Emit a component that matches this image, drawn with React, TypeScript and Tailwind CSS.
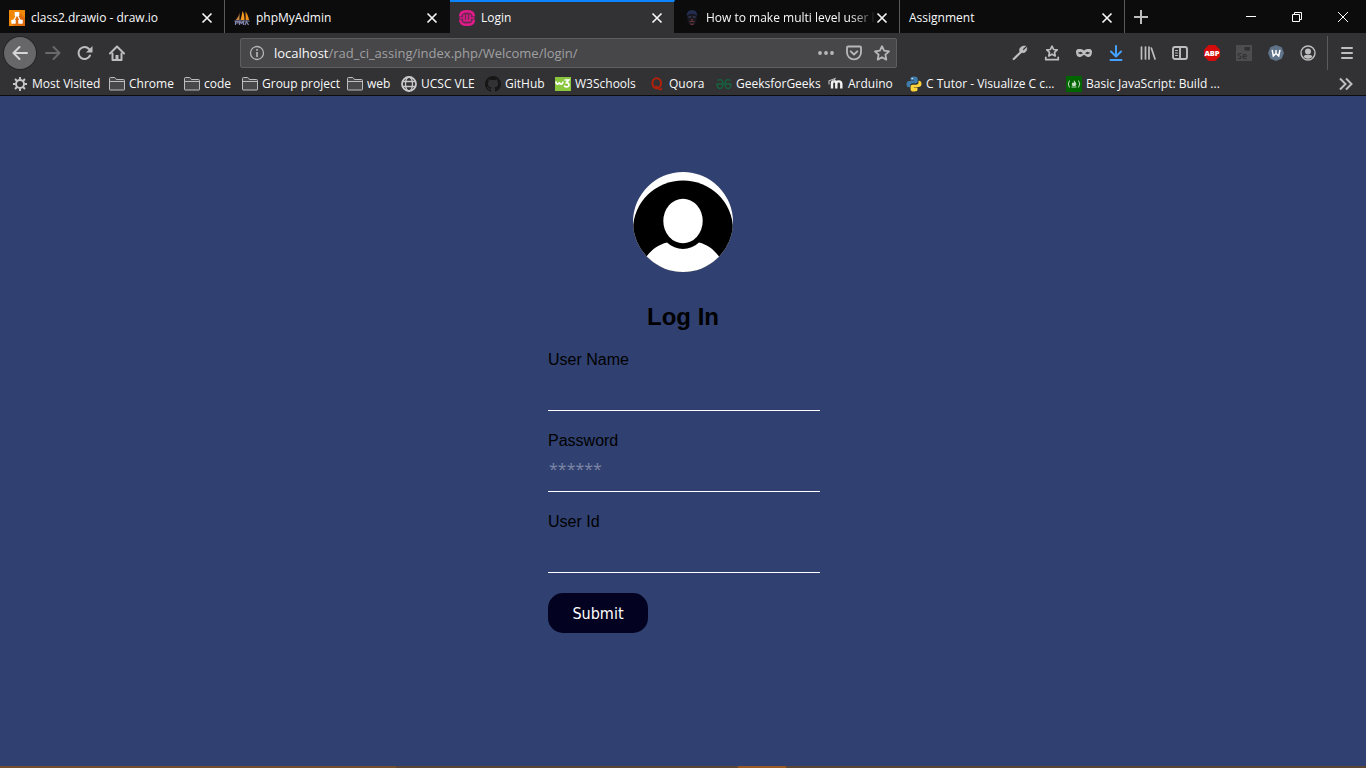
import type { ReactNode } from "react";

const UI_FONT = "font-['Open_Sans','Noto_Sans',sans-serif]";

/* ---------- favicons and bookmark icons ---------- */

const DrawioIcon = () => (
  <svg width="16" height="16" viewBox="0 0 16 16" className="shrink-0">
    <rect width="16" height="16" fill="#f08705" />
    <path d="M10 2.5 16 8v8H5.500L2.500 13.500 6 9z" fill="#df6c0c" />
    <path d="M8 4.500 4.500 11M8 4.500l3.500 6.500" stroke="#fff" strokeWidth="1.300" />
    <rect x="5.700" y="2" width="4.600" height="4" rx=".5" fill="#fff" />
    <rect x="2.300" y="9.700" width="4.400" height="4" rx=".5" fill="#fff" />
    <rect x="9.300" y="9.700" width="4.400" height="4" rx=".5" fill="#fff" />
  </svg>
);

const PmaIcon = () => (
  <svg width="16" height="16" viewBox="0 0 16 16" className="shrink-0">
    <path d="M5.500 2.500V10H1.500C3.500 8 5 5.500 5.500 2.500z" fill="#c98542" />
    <path d="M8.500 1C8 4 7.500 7 6.500 10h4C10.500 6.500 10 3 8.500 1z" fill="#f59a23" />
    <path d="M11.500 1.500c0 3 .2 6 .2 8.500H15c-.5-3.500-1.800-6.500-3.500-8.500z" fill="#f08c1a" />
    <path d="M.5 11h15M1.500 10.500V15M1.500 11.500h2.500v1.500H1.500M5.500 15v-3.500L7.500 13.500l2-2V15M11 15l1.500-3.500L14.500 15" stroke="#8286ad" strokeWidth="1.200" fill="none" />
  </svg>
);

const WampIcon = () => (
  <svg width="16" height="16" viewBox="0 0 16 16" className="shrink-0" fill="none">
    <rect width="16" height="16" rx="6" fill="#6b2850" />
    <path d="M1.200 6.300C1.200 3 3.500 1.200 8 1.200s6.800 1.800 6.800 5.100M1.200 9.700c0 3.300 2.300 5.100 6.800 5.100s6.800-1.800 6.800-5.100" stroke="#e31a8c" strokeWidth="2.400" />
    <path d="M.8 8h3M12.200 8h3" stroke="#e31a8c" strokeWidth="1.500" />
    <path d="M5 4.500v6.300h6V4.500M8 4.500v6" stroke="#e31a8c" strokeWidth="1.600" />
  </svg>
);

const FaceIcon = () => (
  <svg width="16" height="16" viewBox="0 0 16 16" className="shrink-0">
    <path d="M3 6c0-4 2-5.700 5-5.700S13 2 13 6c0 5-1.800 9.500-5 9.500S3 11 3 6z" fill="#18161f" />
    <path d="M2.800 6C2.700 2 5 .3 8 .3s5.300 1.700 5.200 5.700C12 4.300 10 3.800 8 3.800S4 4.300 2.800 6z" fill="#232e52" />
    <path d="M4.500 7h2.700M8.800 7h2.700" stroke="#46506f" strokeWidth="1" />
    <path d="M5.500 11.800c1.500-.8 3.500-.8 5 0M6 13.800c1.300.7 2.700.7 4 0M7 9.800h2" stroke="#7a3d3a" strokeWidth="1" fill="none" />
  </svg>
);

const GearIcon = () => (
  <svg width="16" height="16" viewBox="0 0 16 16" className="shrink-0" fill="none" stroke="#c8c8c9">
    <circle cx="8" cy="8" r="4" strokeWidth="1.900" />
    <path d="M8 1v2.500M8 12.500V15M1 8h2.500M12.500 8H15M3 3l2 2M11 11l2 2M13 3l-2 2M5 11l-2 2" strokeWidth="1.900" />
  </svg>
);

const FolderIcon = () => (
  <svg width="16" height="16" viewBox="0 0 16 16" className="shrink-0" fill="#48484a" stroke="#bdbdbe" strokeLinejoin="round">
    <path d="M.5 13.500v-11q0-1 1-1h4q.7 0 1 .7l.8 1.300h7.200q1 0 1 1v9q0 .5-.6.5H1q-.5 0-.5-.5z" />
    <path d="M.5 5.500h15" />
  </svg>
);

const GlobeIcon = () => (
  <svg width="16" height="16" viewBox="0 0 16 16" className="shrink-0" fill="none" stroke="#c8c8c9" strokeWidth="1.300">
    <circle cx="8" cy="8" r="7" strokeWidth="1.800" />
    <ellipse cx="8" cy="8" rx="3.500" ry="7" />
    <path d="M1.500 5.500h13M1.500 10.500h13" />
  </svg>
);

const GithubIcon = () => (
  <svg width="16" height="16" viewBox="0 0 16 16" className="shrink-0" fill="#161616">
    <path d="M8 0a8 8 0 0 0-2.530 15.590c.4.070.55-.17.55-.38v-1.490c-2.010.37-2.530-.49-2.690-.94-.09-.23-.48-.94-.82-1.130-.28-.15-.68-.52-.01-.53.630-.01 1.080.58 1.230.82.720 1.210 1.870.87 2.330.66.070-.52.280-.87.510-1.070-1.780-.2-3.640-.89-3.640-3.950 0-.87.310-1.590.82-2.150-.08-.2-.36-1.020.08-2.120 0 0 .67-.21 2.200.82a7.420 7.420 0 0 1 4 0c1.530-1.040 2.200-.82 2.200-.82.440 1.100.160 1.920.080 2.120.510.560.820 1.270.820 2.150 0 3.070-1.870 3.750-3.650 3.950.290.250.540.730.540 1.480v2.200c0 .21.150.46.550.38A8 8 0 0 0 8 0z" />
  </svg>
);

const W3Icon = () => (
  <svg width="16" height="16" viewBox="0 0 16 16" className="shrink-0" fill="none" stroke="#fff">
    <rect y="1" width="16" height="14" fill="#8bc63f" stroke="none" />
    <path d="M1 5.500c0 3.300 3 3.300 3.300.5.200 3 3.300 3 3.700-.5" strokeWidth="1.700" />
    <path d="M9.500 4h4.300l-2.300 2.700c3.500-.2 3.200 4.500-.2 4.200-1 0-1.800-.5-2-1.400" strokeWidth="1.600" />
  </svg>
);

const QuoraIcon = () => (
  <svg width="16" height="16" viewBox="0 0 16 16" className="shrink-0" fill="none" stroke="#b5200b">
    <ellipse cx="7.700" cy="7.300" rx="4.300" ry="5" strokeWidth="2" />
    <path d="M6 10.500c2.500-1 3.300 3.200 5 3.200 1.200 0 1.600-.7 1.600-1.700" strokeWidth="1.500" />
  </svg>
);

const GfgIcon = () => (
  <svg width="16" height="16" viewBox="0 0 16 16" className="shrink-0" fill="none" stroke="#14663f" strokeWidth="1.300">
    <path d="M1.500 4.500C5 2.300 7 4.500 7 8s-1.500 4.500-3.200 4.500S1 11 1 8h6M14.500 4.500C11 2.300 9 4.500 9 8s1.500 4.500 3.200 4.500S15 11 15 8H9" />
  </svg>
);

const MoodleIcon = () => (
  <svg width="16" height="16" viewBox="0 0 16 16" className="shrink-0" fill="none" stroke="#f2f2f2">
    <path d="M4 12.500V7.500c0-3 4.300-3 4.300 0v5M8.300 8c0-3.500 5-3.500 5 0v4.500" strokeWidth="2.400" />
    <path d="M.5 5 7 2.500 5.500 5.500M1 5v3.500" strokeWidth="1.200" stroke="#b9b9b9" />
  </svg>
);

const PythonIcon = () => (
  <svg width="16" height="16" viewBox="0 0 16 16" className="shrink-0">
    <path d="M8 .5c-3 0-3.500 1-3.500 2.300V4.500H8.200v.6H3C1.300 5.100.5 6.500.5 8.200S1.300 11.300 3 11.300h1.300V9.500c0-1.300 1-2.200 2.300-2.200h3.200c1.100 0 1.900-.9 1.900-2V2.800C11.700 1.300 10.500.5 8 .5z" fill="#3f7cac" />
    <path d="M8 15.500c3 0 3.500-1 3.500-2.300v-1.700H7.800v-.6H13c1.700 0 2.500-1.400 2.500-3.100S14.700 4.700 13 4.700h-.5v1.800c0 1.300-1 2.200-2.300 2.200H6.500c-1.100 0-1.900.9-1.900 2v2.500c0 1.500.9 2.300 3.400 2.300z" fill="#ffd43b" />
    <circle cx="6.200" cy="2.500" r=".7" fill="#fff" />
  </svg>
);

const FccIcon = () => (
  <svg width="16" height="16" viewBox="0 0 16 16" className="shrink-0" fill="none" stroke="#c4dcc4">
    <rect width="16" height="16" fill="#006400" stroke="none" />
    <path d="M3.500 4.500Q1 8 3.500 11.500M12.500 4.500Q15 8 12.500 11.500M5.500 11h5" strokeWidth="1" />
    <path d="M8 4c.3 1.500 2.500 2.300 2.300 4.300-.1 1-.8 1.700-1.300 1.700H6.700C5 8.500 6 7.300 7 6.200c.2.600.5.800.8.600C8.200 6 7.500 5 8 4z" fill="#c4dcc4" stroke="none" />
  </svg>
);

/* ---------- tab strip ---------- */

type Tab = { title: string; icon?: ReactNode; active?: boolean; divider?: boolean };

const tabs: Tab[] = [
  { title: "class2.drawio - draw.io", icon: <DrawioIcon />, divider: true },
  { title: "phpMyAdmin", icon: <PmaIcon /> },
  { title: "Login", icon: <WampIcon />, active: true },
  { title: "How to make multi level user lo", icon: <FaceIcon />, divider: true },
  { title: "Assignment", divider: true },
];

function TabItem({ title, icon, active, divider }: Tab) {
  return (
    <div
      className={`flex h-full w-[225px] min-w-0 items-center border-r pl-[9px] pr-[11px] ${
        active ? "border-t-2 border-t-[#0a84ff] bg-[#323234]" : "bg-[#0c0c0d] pt-[2px]"
      } ${divider ? "border-r-[#5b5b5d]" : active ? "border-r-[#0c0c0d]" : "border-r-transparent"}`}
    >
      {icon}
      <span
        className={`-mr-1 min-w-0 flex-1 whitespace-nowrap text-[12px] leading-4 ${icon ? "ml-[6px] " : ""}${
          title.length > 30 ? "[mask-image:linear-gradient(to_right,black_85%,transparent)]" : ""
        }`}
      >
        {title}
      </span>
      <button type="button" aria-label={`Close ${title}`} className="ml-1 flex h-4 w-3 items-center justify-center">
        <svg width="12" height="12" viewBox="0 0 12 12" stroke="#f4f4f5" strokeWidth="1.700" className="shrink-0">
          <path d="M1.500 1.500l9 9M10.500 1.500l-9 9" />
        </svg>
      </button>
    </div>
  );
}

function TabStrip() {
  return (
    <div className="flex h-[33px] items-stretch bg-[#0c0c0d]">
      {tabs.map((t) => (
        <TabItem key={t.title} {...t} />
      ))}
      <button type="button" aria-label="New tab" className="flex w-8 items-center justify-center">
        <svg width="14" height="14" viewBox="0 0 14 14" stroke="#bebebf" strokeWidth="2">
          <path d="M7 0v14M0 7h14" />
        </svg>
      </button>
      <div className="ml-auto flex">
        <button type="button" aria-label="Minimize" className="flex w-[46px] items-center justify-center">
          <svg width="10" height="10" viewBox="0 0 10 10" stroke="#fff">
            <path d="M0 4.500h10" />
          </svg>
        </button>
        <button type="button" aria-label="Restore" className="flex w-[46px] items-center justify-center">
          <svg width="10" height="10" viewBox="0 0 10 10" stroke="#fff" fill="none">
            <path d="M.5 2.500h7v7h-7zM2.500 2.500v-2h7v7h-2" />
          </svg>
        </button>
        <button type="button" aria-label="Close window" className="flex w-[46px] items-center justify-center">
          <svg width="10" height="10" viewBox="0 0 10 10" stroke="#fff">
            <path d="M0 0l10 10M10 0L0 10" />
          </svg>
        </button>
      </div>
    </div>
  );
}

/* ---------- navigation toolbar ---------- */

function ToolIcon({ label, children, color = "#bebebf" }: { label: string; children: ReactNode; color?: string }) {
  return (
    <button type="button" aria-label={label} className="flex h-8 w-8 items-center justify-center">
      <svg width="16" height="16" viewBox="0 0 16 16" fill="none" stroke={color} strokeWidth="2" strokeLinecap="round" strokeLinejoin="round">
        {children}
      </svg>
    </button>
  );
}

function Toolbar() {
  return (
    <div className="flex h-[39px] items-center bg-[#323234] pl-1 pr-[3px]">
      <button
        type="button"
        aria-label="Back"
        className="mr-px flex h-8 w-8 items-center justify-center rounded-full bg-[#67676a] ring-1 ring-[#252527]"
      >
        <svg width="16" height="16" viewBox="0 0 16 16" fill="none" stroke="#d6d6d7" strokeWidth="2" strokeLinecap="round" strokeLinejoin="round">
          <path d="M15 8H1.500M7.500 2l-6 6 6 6" />
        </svg>
      </button>
      <ToolIcon label="Forward" color="#69696b">
        <path d="M1 8h13.500M8.500 2l6 6-6 6" />
      </ToolIcon>
      <ToolIcon label="Reload">
        <path d="M13 10.500A6 6 0 1 1 12 4" />
        <path d="M15.500 1v6.500H9z" fill="#bebebf" strokeWidth="0" />
      </ToolIcon>
      <ToolIcon label="Home">
        <path d="M1 8.500 8 1.500l7 7" />
        <path d="M3.500 8.500V15h9V8.500" />
        <path d="M8 14.500V10" strokeLinecap="butt" strokeWidth="3" />
      </ToolIcon>

      <div className="ml-[107px] flex h-[30px] min-w-0 flex-1 items-center rounded-[2px] border border-[#5e5e60] bg-[#474749] px-2">
        <svg width="16" height="16" viewBox="0 0 16 16" fill="none" stroke="#b4b4b5" className="shrink-0">
          <circle cx="8" cy="8" r="6.500" strokeWidth="1.300" />
          <path d="M8 7v5M8 4v1.700" strokeWidth="1.700" />
        </svg>
        <a href="#" className="ml-[9px] min-w-0 flex-1 truncate text-[13px] leading-5 text-[#a0a0a2]">
          <span className="text-[#f9f9fa]">localhost</span>/rad_ci_assing/index.php/Welcome/login/
        </a>
        <div className="-mr-2 flex">
          <button type="button" aria-label="Page actions" className="flex w-7 items-center justify-center">
            <svg width="16" height="16" viewBox="0 0 16 16" fill="#b8b8b9">
              <circle cx="2" cy="8" r="1.900" />
              <circle cx="8" cy="8" r="1.900" />
              <circle cx="14" cy="8" r="1.900" />
            </svg>
          </button>
          <button type="button" aria-label="Save to Pocket" className="flex w-7 items-center justify-center">
            <svg width="16" height="16" viewBox="0 0 16 16" fill="none" stroke="#b8b8b9" strokeWidth="1.800" strokeLinecap="round" strokeLinejoin="round">
              <path d="M1 2.500q0-1 1-1h12q1 0 1 1V7.500a7 6.800 0 0 1-14 0z" />
              <path d="M4.700 6.300 8 9.500l3.300-3.200" />
            </svg>
          </button>
          <button type="button" aria-label="Bookmark this page" className="flex w-7 items-center justify-center">
            <svg width="16" height="16" viewBox="0 0 16 16" fill="none" stroke="#b8b8b9" strokeWidth="1.800" strokeLinejoin="round">
              <path d="M8 1.200l2.100 4.500 4.900.6-3.600 3.400.9 4.900L8 12.200l-4.300 2.400.9-4.900L1 6.300l4.900-.6z" />
            </svg>
          </button>
        </div>
      </div>

      <div className="ml-[107px] flex items-center">
        <ToolIcon label="Developer tools">
          <path d="M1.700 14 9 7" strokeWidth="2.200" />
          <path d="M13.500 1.200 10.500 4.200l1.200 1.200 3-3c.6 2.800-1 5.500-4 5.300L8 7.300 7.500 5C7.500 2.500 10.500.500 13.500 1.200z" fill="#bebebf" strokeWidth=".6" />
        </ToolIcon>
        <ToolIcon label="Bookmarks menu">
          <path d="M8 1.200l1.600 3.300 3.600.4-2.700 2.500.7 3.600L8 9.200 4.800 11l.7-3.600-2.700-2.500 3.600-.4z" strokeWidth="1.700" />
          <path d="M1.800 12.500v2.200h12.400V12.500" strokeWidth="1.800" />
        </ToolIcon>
        <ToolIcon label="Private browsing">
          <path
            d="M8 5.500C6 4 4 3.700 2.500 4 .8 4.300 0 5.200 0 7c0 3 1.500 5 3.700 5C6 12 6.700 10 8 10s2 2 4.300 2C14.500 12 16 10 16 7c0-1.800-.8-2.700-2.500-3-1.500-.3-3.500 0-5.500 1.500z"
            fill="#bebebf"
            strokeWidth="0"
          />
          <path d="M2.700 8q1.800-2 3.800.3Q4.300 9.700 2.700 8zM13.300 8q-1.800-2-3.800.3 2.200 1.400 3.800-.3z" fill="#323234" stroke="#323234" strokeWidth=".5" />
        </ToolIcon>
        <ToolIcon label="Downloads" color="#45a1ff">
          <path d="M8 1v10M3 6.500l5 5 5-5M2.500 15h11" />
        </ToolIcon>
        <ToolIcon label="Library">
          <path d="M1.500 2v12M5.500 2v12M9 2v12M11.300 3l3.700 11" strokeWidth="1.700" />
        </ToolIcon>
        <ToolIcon label="Sidebars">
          <rect x="1" y="2" width="14" height="12" rx="2" strokeWidth="1.900" />
          <path d="M8 2v12" strokeWidth="1.900" />
          <path d="M3.500 5.500h2M3.500 8h2M3.500 10.500h2" strokeWidth="1" />
        </ToolIcon>
        <button type="button" aria-label="AdBlock Plus" className="flex h-8 w-8 items-center justify-center">
          <svg width="16" height="16" viewBox="0 0 16 16">
            <path d="M4.700 0h6.600L16 4.700v6.600L11.300 16H4.700L0 11.300V4.700z" fill="#d40c0c" />
            <text x="8" y="11" textAnchor="middle" fontSize="7.500" fontWeight="800" fill="#fff">ABP</text>
          </svg>
        </button>
        <button type="button" aria-label="Selenium IDE" className="flex h-8 w-8 items-center justify-center">
          <svg width="16" height="16" viewBox="0 0 16 16">
            <rect width="16" height="16" fill="#4d4d4f" />
            <rect x="8.500" y="2" width="5.500" height="3.500" fill="#303032" />
            <text x="1" y="13.500" fontSize="9" fontWeight="600" fill="#303032">Se</text>
          </svg>
        </button>
        <button type="button" aria-label="Wappalyzer" className="flex h-8 w-8 items-center justify-center">
          <svg width="16" height="16" viewBox="0 0 16 16" fill="none">
            <path d="M8 0l5.700 2.300L16 8l-2.300 5.700L8 16l-5.700-2.300L0 8l2.300-5.700z" fill="#5f7389" />
            <path d="M4.200 4.800 5.300 11 8 8.500l2.700 2.500 1.300-6.200M8 5v3.500" stroke="#fff" strokeWidth="1.500" />
          </svg>
        </button>
        <ToolIcon label="Account">
          <circle cx="8" cy="8" r="7" strokeWidth="1.400" />
          <circle cx="8" cy="6.500" r="3" fill="#bebebf" strokeWidth="0" />
          <path d="M3.500 11.500C5 9.500 6 10 8 10s3-.5 4.500 1.500C11 13.500 9.500 13.700 8 13.700s-3-.2-4.500-2.200z" fill="#bebebf" strokeWidth="0" />
        </ToolIcon>
      </div>

      <div className="ml-[3px] flex h-[34px] items-center border-l border-[#5b5b5d] pl-[3px]">
        <ToolIcon label="Open menu">
          <path d="M3 3h10M3 8h10M3 13h10" />
        </ToolIcon>
      </div>
    </div>
  );
}

/* ---------- bookmarks bar ---------- */

const bookmarks: { label: string; icon: ReactNode; width: string }[] = [
  { label: "Most Visited", icon: <GearIcon />, width: "w-[97px]" },
  { label: "Chrome", icon: <FolderIcon />, width: "w-[75px]" },
  { label: "code", icon: <FolderIcon />, width: "w-[58px]" },
  { label: "Group project", icon: <FolderIcon />, width: "w-[105px]" },
  { label: "web", icon: <FolderIcon />, width: "w-[54px]" },
  { label: "UCSC VLE", icon: <GlobeIcon />, width: "w-[84px]" },
  { label: "GitHub", icon: <GithubIcon />, width: "w-[70px]" },
  { label: "W3Schools", icon: <W3Icon />, width: "w-[94px]" },
  { label: "Quora", icon: <QuoraIcon />, width: "w-[67px]" },
  { label: "GeeksforGeeks", icon: <GfgIcon />, width: "w-[112px]" },
  { label: "Arduino", icon: <MoodleIcon />, width: "w-[78px]" },
  { label: "C Tutor - Visualize C c...", icon: <PythonIcon />, width: "w-[160px]" },
  { label: "Basic JavaScript: Build ...", icon: <FccIcon />, width: "w-[160px]" },
];

function BookmarksBar() {
  return (
    <nav className="flex h-6 items-center border-b border-[#0c0c0d] bg-[#323234] pl-3">
      <ul className="flex items-center">
        {bookmarks.map((b) => (
          <li key={b.label} className={`shrink-0 ${b.width}`}>
            <a href="#" className="flex items-center gap-1 whitespace-nowrap text-[12px] leading-4">
              {b.icon}
              {b.label}
            </a>
          </li>
        ))}
      </ul>
      <button type="button" aria-label="More bookmarks" className="ml-auto mr-3 flex h-4 w-4 items-center justify-center">
        <svg width="16" height="16" viewBox="0 0 16 16" fill="none" stroke="#bebebf" strokeWidth="2" className="shrink-0">
          <path d="M2 2.500 7.500 8 2 13.500M8 2.500 13.500 8 8 13.500" />
        </svg>
      </button>
    </nav>
  );
}

/* ---------- login page ---------- */

function Avatar() {
  return (
    <svg width="100" height="100" viewBox="0 0 100 100" role="img" aria-label="User avatar" className="mx-auto">
      <defs>
        <clipPath id="avatar-circle">
          <circle cx="50" cy="50" r="50" />
        </clipPath>
      </defs>
      <g clipPath="url(#avatar-circle)">
        <rect width="100" height="100" fill="#fff" />
        <ellipse cx="50" cy="57.500" rx="50" ry="49" fill="#000" />
        <path d="M13.500 84.500C19 77 26 72.500 34 70.500c9 8.500 23 8.500 32 0 8 2 14.500 6.500 20 14L86 100H13z" fill="#fff" />
        <ellipse cx="50" cy="49" rx="19.700" ry="22.200" fill="#fff" />
      </g>
    </svg>
  );
}

function Field({ id, label, type = "text", placeholder }: { id: string; label: string; type?: string; placeholder?: string }) {
  return (
    <div className="mb-5">
      <label htmlFor={id} className="block text-[16px] leading-5">
        {label}
      </label>
      <input
        id={id}
        name={id}
        type={type}
        placeholder={placeholder}
        className="block h-[41px] w-[272px] border-b border-white bg-transparent px-px pb-1 font-['Open_Sans','Noto_Sans',sans-serif] text-[16px] text-white outline-none placeholder:text-[#7d87a5]"
      />
    </div>
  );
}

function LoginPage() {
  return (
    <main className="flex-1 bg-[#304070] pb-10 pt-[76px] font-['Liberation_Sans',Arial,sans-serif] text-black">
      <form className="mx-auto w-[270px]" onSubmit={(e) => e.preventDefault()}>
        <Avatar />
        <h1 className="mb-[19px] mt-[31px] text-center text-[24px] font-bold leading-7">Log In</h1>
        <Field id="username" label="User Name" />
        <Field id="password" label="Password" type="password" placeholder="******" />
        <Field id="userid" label="User Id" />
        <button
          type="submit"
          className="h-10 w-[100px] rounded-[15px] bg-[#030321] pt-px font-['DejaVu_Sans_Condensed','Open_Sans',sans-serif] text-[16px] text-white"
        >
          Submit
        </button>
      </form>
    </main>
  );
}

export default function App() {
  return (
    <div className="flex min-h-screen flex-col bg-[#304070]">
      <header className={`${UI_FONT} text-[#f9f9fa]`}>
        <TabStrip />
        <Toolbar />
        <BookmarksBar />
      </header>
      <LoginPage />
      <div className="flex h-[2px] bg-[#5c4636]">
        <div className="w-[29%] bg-[#74502f]" />
        <div className="ml-[25%] w-12 bg-[#9c5a23]" />
      </div>
    </div>
  );
}
